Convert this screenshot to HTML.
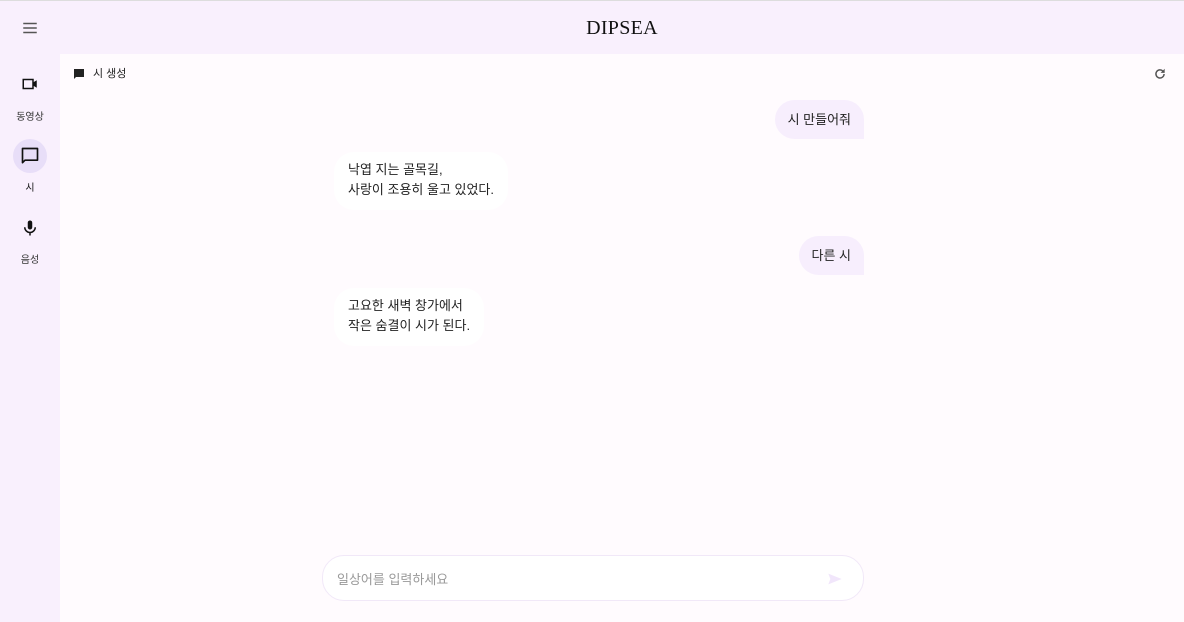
<!DOCTYPE html>
<html><head><meta charset="utf-8"><style>
*{margin:0;padding:0;box-sizing:border-box}
body{width:1184px;height:622px;overflow:hidden;background:#f9f0fd;font-family:"Liberation Sans","Noto Sans CJK KR",sans-serif;color:#1d1b20;position:relative}
.top{position:absolute;left:0;top:0;width:1184px;height:54px;border-top:1px solid #ddd}
.title{position:absolute;left:60px;width:1124px;top:16px;text-align:center;font-family:"Liberation Serif",serif;font-size:20px;letter-spacing:0.3px;color:#111}
.main{position:absolute;left:60px;top:54px;width:1124px;height:568px;background:#fffbfe}
.nav{position:absolute;left:0;width:60px;text-align:center;font-size:10px;color:#333}
.pill{position:absolute;left:13px;top:139px;width:34px;height:34px;border-radius:17px;background:#e8def8}
.b{position:absolute;font-size:13px;line-height:20px;color:#222}
.u{background:#f7eefd;border-radius:20px 20px 0 20px;padding:0 13px;height:39px;line-height:39px}
.bot{background:#fff;border-radius:20px;padding:8px 14px}
.inp{position:absolute;left:322px;top:555px;width:542px;height:46px;border:1px solid #f1e8f8;border-radius:22px;background:#fff}
</style></head><body>
<div class="top">
<svg style="position:absolute;left:21px;top:18px" width="18" height="18" viewBox="0 0 24 24"><path d="M3 6h18M3 12h18M3 18h18" stroke="#555" stroke-width="2"/></svg>
<div class="title">DIPSEA</div>
</div>
<svg style="position:absolute;left:21px;top:75px" width="18" height="18" viewBox="0 0 24 24"><path d="M3 6h13v12H3z" fill="none" stroke="#111" stroke-width="2"/><path d="M16 10l5-3v10l-5-3z" fill="#111"/></svg>
<div class="nav" style="top:108px">동영상</div>
<div class="pill"></div>
<svg style="position:absolute;left:20px;top:146px" width="20" height="20" viewBox="0 0 24 24"><path d="M3 3h18v14H6l-3 3z" fill="none" stroke="#111" stroke-width="2" stroke-linejoin="round"/></svg>
<div class="nav" style="top:179px;color:#111">시</div>
<svg style="position:absolute;left:21px;top:219px" width="18" height="18" viewBox="0 0 24 24"><rect x="9" y="2" width="6" height="12" rx="3" fill="#111"/><path d="M5 11a7 7 0 0 0 14 0M12 18v4" stroke="#111" stroke-width="2" fill="none"/></svg>
<div class="nav" style="top:251px">음성</div>
<div class="main"></div>
<svg style="position:absolute;left:73px;top:68px" width="12" height="12" viewBox="0 0 24 24"><path d="M2 2h20v16H6l-4 4z" fill="#222"/></svg>
<div class="b" style="left:93px;top:64px;font-size:11px">시 생성</div>
<svg style="position:absolute;left:1153px;top:67px" width="14" height="14" viewBox="0 0 24 24"><path d="M19 12a7 7 0 1 1-2-5" stroke="#555" stroke-width="2.5" fill="none"/><path d="M20 3v7h-7z" fill="#555"/></svg>
<div class="b u" style="right:320px;top:100px">시 만들어줘</div>
<div class="b bot" style="left:334px;top:152px;height:58px">낙엽 지는 골목길,<br>사랑이 조용히 울고 있었다.</div>
<div class="b u" style="right:320px;top:236px">다른 시</div>
<div class="b bot" style="left:334px;top:288px;height:58px">고요한 새벽 창가에서<br>작은 숨결이 시가 된다.</div>
<div class="inp">
<div style="position:absolute;left:14px;top:13px;font-size:13px;color:#999">일상어를 입력하세요</div>
<svg style="position:absolute;left:504px;top:15px" width="16" height="16" viewBox="0 0 24 24"><path d="M2 4l20 8-20 8 3-8z" fill="#f1e6fb"/></svg>
</div>
</body></html>
